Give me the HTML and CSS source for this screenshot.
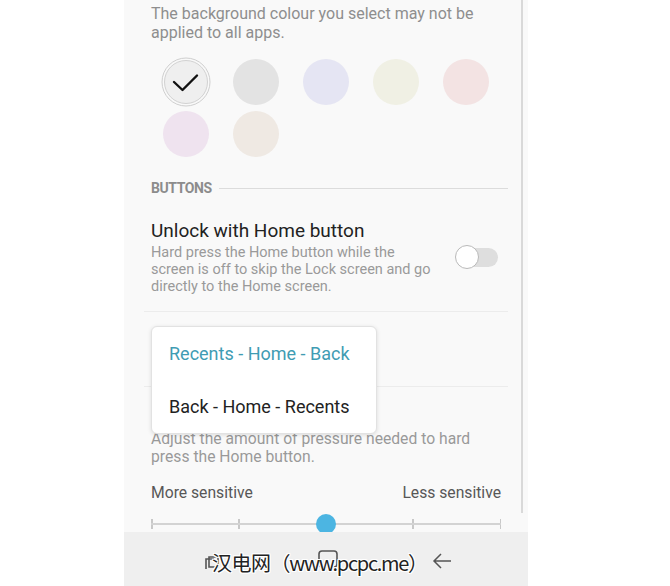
FILE: index.html
```html
<!DOCTYPE html>
<html lang="en">
<head>
    <meta charset="UTF-8">
    <meta name="viewport" content="width=device-width, initial-scale=1.0">
    <title>Display settings</title>
    <link rel="stylesheet" href="styles.css">
</head>
<body>

<div class="screen">
    <div class="content">
        <p class="note">The background colour you select may not be applied to all apps.</p>

        <div class="swatches">
            <div class="swatch selected">
                <svg width="50" height="50" viewBox="0 0 50 50">
                    <circle cx="25" cy="25" r="24" fill="none" stroke="#cfcfcf" stroke-width="1"/>
                    <circle cx="25" cy="25" r="21.5" fill="#efefef" stroke="#d2d2d2" stroke-width="1"/>
                    <path d="M13 25 L21.5 33 L36 18.5" fill="none" stroke="#111" stroke-width="2.4" stroke-linecap="round" stroke-linejoin="round"/>
                </svg>
            </div>
            <div class="swatch grey"></div>
            <div class="swatch lavender"></div>
            <div class="swatch cream"></div>
            <div class="swatch pink"></div>
            <div class="swatch lilac"></div>
            <div class="swatch beige"></div>
        </div>

        <div class="section-head">
            <span>BUTTONS</span>
            <div class="rule"></div>
        </div>

        <div class="setting">
            <div class="setting-text">
                <div class="title">Unlock with Home button</div>
                <div class="desc">Hard press the Home button while the screen is off to skip the Lock screen and go directly to the Home screen.</div>
            </div>
            <div class="toggle"><div class="knob"></div></div>
        </div>

        <div class="divider first"></div>
        <div class="layout-row"></div>
        <div class="divider"></div>

        <div class="pressure">
            <div class="pressure-desc">Adjust the amount of pressure needed to hard press the Home button.</div>
            <div class="range-labels">
                <span>More sensitive</span>
                <span>Less sensitive</span>
            </div>
            <div class="slider">
                <div class="track"></div>
                <div class="ticks">
                    <i></i><i></i><i></i><i></i><i></i>
                </div>
                <div class="thumb"></div>
            </div>
        </div>

        <div class="popup">
            <div class="popup-item active">Recents - Home - Back</div>
            <div class="popup-item">Back - Home - Recents</div>
        </div>

        <div class="scrollbar"></div>
    </div>

    <div class="navbar">
        <svg class="nav-recents" width="16" height="16" viewBox="0 0 16 16">
            <path d="M2 14 V4 H10" fill="none" stroke="#555" stroke-width="1.6"/>
            <path d="M5 12 V2 H14 V12 Z" fill="none" stroke="#555" stroke-width="1.6"/>
        </svg>
        <svg class="nav-home" width="20" height="18" viewBox="0 0 20 18">
            <rect x="1" y="1" width="18" height="16" rx="3" fill="none" stroke="#555" stroke-width="1.6"/>
        </svg>
        <svg class="nav-back" width="20" height="18" viewBox="0 0 20 18">
            <path d="M19 9 H2 M9 2 L2 9 L9 16" fill="none" stroke="#555" stroke-width="1.5"/>
        </svg>
        <div class="watermark">汉电网<span class="wm-latin">（www.pcpc.me）</span></div>
    </div>
</div>

</body>
</html>
```

FILE: styles.css
```css
* {
    margin: 0;
    padding: 0;
    box-sizing: border-box;
}

html, body {
    height: 100%;
    background-color: #fff;
}

body {
    font-family: Roboto, "Noto Sans", sans-serif;
    overflow: hidden;
}

.screen {
    width: 404px;
    height: 586px;
    margin-left: 124px;
    background-color: #f9f9f9;
    display: flex;
    flex-direction: column;
}

.content {
    position: relative;
    height: 532px;
    overflow: hidden;
    padding: 4px 20px 0 27px;
}

.note {
    font-size: 16px;
    line-height: 19px;
    color: #8e8e8e;
    padding-right: 20px;
}

.swatches {
    display: grid;
    grid-template-columns: repeat(5, 46px);
    column-gap: 24px;
    row-gap: 6px;
    margin-top: 17px;
    margin-left: 12px;
}

.swatch {
    width: 46px;
    height: 46px;
    border-radius: 50%;
    display: flex;
    align-items: center;
    justify-content: center;
}

.swatch svg {
    flex-shrink: 0;
}

.grey { background-color: #e3e3e3; }
.lavender { background-color: #e5e5f3; }
.cream { background-color: #f0f0e4; }
.pink { background-color: #f3e3e3; }
.lilac { background-color: #efe3ef; }
.beige { background-color: #efe9e3; }

.section-head {
    display: flex;
    align-items: center;
    margin-top: 23px;
    height: 16px;
}

.section-head span {
    font-size: 14px;
    font-weight: 700;
    color: #8c8c8c;
    letter-spacing: -0.4px;
}

.rule {
    flex: 1;
    height: 1px;
    background-color: #dcdcdc;
    margin-left: 7px;
}

.setting {
    display: flex;
    align-items: center;
    margin-top: 23px;
}

.setting-text {
    flex: 1;
}

.title {
    font-size: 19px;
    line-height: 24px;
    color: #222;
}

.desc {
    font-size: 14.5px;
    line-height: 17px;
    color: #9a9a9a;
    margin-top: 1px;
}

.toggle {
    width: 42px;
    height: 19px;
    border-radius: 10px;
    background-color: #dedede;
    margin-left: 22px;
    margin-right: 10px;
    display: flex;
    align-items: center;
}

.knob {
    width: 24px;
    height: 24px;
    border-radius: 50%;
    background-color: #fff;
    border: 1.5px solid #b9b9b9;
    margin-left: -1px;
}

.divider {
    height: 1px;
    background-color: #ececec;
    margin-left: -7px;
}

.divider.first {
    margin-top: 16px;
}

.layout-row {
    height: 74px;
}

.pressure {
    padding-top: 43px;
    padding-right: 7px;
}

.pressure-desc {
    font-size: 15.7px;
    line-height: 18px;
    color: #999;
}

.range-labels {
    display: flex;
    justify-content: space-between;
    font-size: 15.7px;
    line-height: 19px;
    color: #575757;
    margin-top: 17px;
}

.slider {
    position: relative;
    height: 20px;
    margin-top: 12px;
}

.track {
    position: absolute;
    left: 0;
    right: 0;
    top: 9px;
    height: 2px;
    background-color: #d3d3d3;
}

.ticks {
    display: flex;
    justify-content: space-between;
    height: 20px;
    align-items: center;
}

.ticks i {
    display: block;
    width: 1.5px;
    height: 10px;
    background-color: #c8c8c8;
}

.thumb {
    position: absolute;
    left: 165px;
    top: 0;
    width: 20px;
    height: 20px;
    border-radius: 50%;
    background-color: #4cb5e2;
}

.popup {
    position: absolute;
    left: 27px;
    top: 326px;
    width: 226px;
    background-color: #fff;
    border-radius: 6px;
    border: 1px solid #e2e2e2;
    box-shadow: 0 1px 4px rgba(0, 0, 0, 0.12);
}

.popup-item {
    height: 53px;
    display: flex;
    align-items: center;
    padding-left: 17px;
    font-size: 18px;
    color: #222;
}

.popup-item.active {
    color: #3f9cb3;
}

.scrollbar {
    position: absolute;
    left: 397px;
    top: 0;
    width: 2px;
    height: 513px;
    background-color: #d9d9d9;
}

.navbar {
    position: relative;
    flex: 1;
    background-color: #efefef;
}

.nav-recents {
    position: absolute;
    left: 80px;
    top: 23px;
}

.nav-home {
    position: absolute;
    left: 194px;
    top: 18px;
}

.nav-back {
    position: absolute;
    left: 308px;
    top: 20px;
}

.watermark {
    position: absolute;
    left: 88px;
    top: 19px;
    font-family: "Noto Sans CJK SC", sans-serif;
    font-size: 20px;
    line-height: 24px;
    color: #222;
    letter-spacing: -0.5px;
    text-shadow: 1px 0 #fff, -1px 0 #fff, 0 1px #fff, 0 -1px #fff, 1px 1px #fff, -1px -1px #fff, 1px -1px #fff, -1px 1px #fff;
}

.wm-latin {
    letter-spacing: -1.3px;
}
```
